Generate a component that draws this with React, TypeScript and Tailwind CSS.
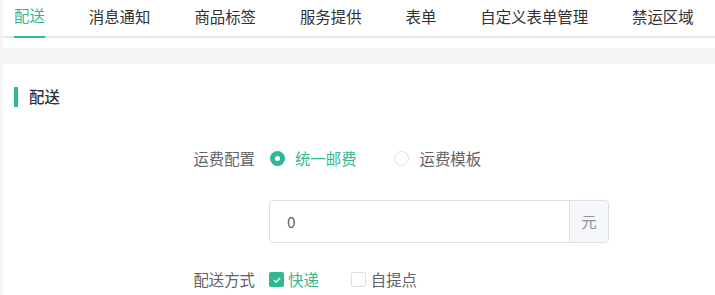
import React from "react";

const tabs = ["配送", "消息通知", "商品标签", "服务提供", "表单", "自定义表单管理", "禁运区域"];

export default function App() {
  const font = { fontFamily: '"Noto Sans CJK SC", "Noto Sans", sans-serif' };
  return (
    <div className="w-[715px] h-[295px] overflow-hidden bg-[#f4f4f5] pl-[3px]" style={font}>
      <div className="bg-white rounded-bl-[4px] h-[48px]">
        <div className="flex gap-[44px] pl-[11px] h-[38px] border-b-2 border-[#e4e7ed] text-[15.4px] text-[#303133]">
          {tabs.map((t, i) => (
            <div
              key={t}
              className={
                i === 0
                  ? "flex items-center h-[38px] -mb-[2px] border-b-2 border-[#2fb894] text-[#2fb894] whitespace-nowrap pb-[4px]"
                  : "flex items-center h-[38px] whitespace-nowrap pb-[4px]"
              }
            >
              {t}
            </div>
          ))}
        </div>
      </div>
      <div className="mt-[16px] bg-white rounded-tl-[4px] h-[240px] pt-[23px]">
        <div className="flex items-center h-[20px] pl-[11px]">
          <div className="w-[4px] h-[20px] shrink-0 bg-[#2fb894]" />
          <div className="ml-[11px] text-[15.4px] font-medium text-[#303133] leading-none">配送</div>
        </div>

        <div className="mt-[30px] flex items-center h-[44px] text-[15.4px]">
          <div className="w-[266px] shrink-0 pr-[14px] text-right text-[#606266]">运费配置</div>
          <div className="flex items-center">
            <div className="ml-[1px] w-[15px] h-[15px] shrink-0 rounded-full bg-[#2fb894] flex items-center justify-center">
              <div className="w-[5px] h-[5px] rounded-full bg-white" />
            </div>
            <span className="ml-[10px] text-[#2fb894]">统一邮费</span>
            <div className="ml-[37px] w-[15px] h-[15px] shrink-0 rounded-full border border-[#dcdfe6] bg-white" />
            <span className="ml-[11px] text-[#606266]">运费模板</span>
          </div>
        </div>

        <div className="mt-[19px] flex h-[43px] text-[15.4px]">
          <div className="w-[266px] shrink-0" />
          <div className="flex w-[340px] shrink-0 h-[43px] border border-[#dcdfe6] rounded-[4px] overflow-hidden">
            <div className="flex-1 flex items-center pl-[17px] text-[#606266]">0</div>
            <div className="w-[39px] bg-[#f5f7fa] border-l border-[#dcdfe6] flex items-center justify-center text-[#909399]">元</div>
          </div>
        </div>

        <div className="mt-[15px] flex items-center h-[44px] text-[15.4px]">
          <div className="w-[266px] shrink-0 pr-[14px] text-right text-[#606266]">配送方式</div>
          <div className="flex items-center">
            <div className="w-[15px] h-[15px] shrink-0 rounded-[2px] bg-[#2fb894] flex items-center justify-center">
              <svg width="10" height="10" viewBox="0 0 10 10">
                <path d="M2 5.2 L4.2 7.2 L8 3" fill="none" stroke="white" strokeWidth="1.3" />
              </svg>
            </div>
            <span className="ml-[4px] text-[#2fb894]">快递</span>
            <div className="ml-[32px] w-[15px] h-[15px] shrink-0 rounded-[2px] border border-[#dcdfe6] bg-white" />
            <span className="ml-[5px] text-[#606266]">自提点</span>
          </div>
        </div>
      </div>
    </div>
  );
}
